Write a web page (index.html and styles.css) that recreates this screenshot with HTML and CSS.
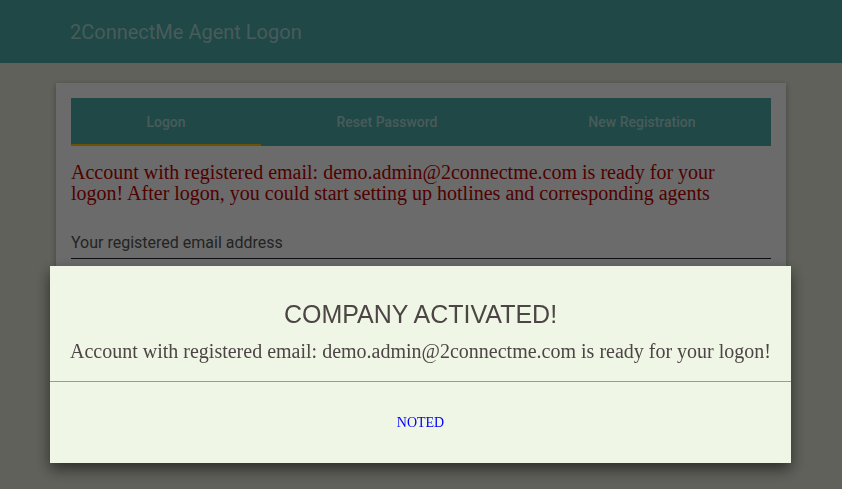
FILE: index.html
```html
<!DOCTYPE html>
<html lang="en">
<head>
    <meta charset="UTF-8">
    <meta name="viewport" content="width=device-width, initial-scale=1.0">
    <title>2ConnectMe Agent Logon</title>
    <link rel="stylesheet" href="styles.css">
</head>
<body>
    <header class="topbar">
        <h1 class="topbar-title">2ConnectMe Agent Logon</h1>
    </header>

    <main class="card">
        <nav class="tabs">
            <div class="tab active">Logon</div>
            <div class="tab">Reset Password</div>
            <div class="tab">New Registration</div>
        </nav>

        <p class="notice">Account with registered email: demo.admin@2connectme.com is ready for your logon! After logon, you could start setting up hotlines and corresponding agents</p>

        <div class="field">
            <input type="email" placeholder="Your registered email address">
        </div>
    </main>

    <!-- dialog shown after activation -->
    <div class="backdrop"></div>
    <div class="dialog">
        <div class="dialog-body">
            <h2 class="dialog-title">COMPANY ACTIVATED!</h2>
            <p class="dialog-text">Account with registered email: demo.admin@2connectme.com is ready for your logon!</p>
        </div>
        <div class="dialog-actions">
            <button class="noted-btn">NOTED</button>
        </div>
    </div>
</body>
</html>
```

FILE: styles.css
```css
* {
    box-sizing: border-box;
    margin: 0;
    padding: 0;
}

body {
    background-color: #e4e7d8;
    font-family: 'Roboto', sans-serif;
    height: 489px;
    overflow: hidden;
}

.topbar {
    height: 63px;
    background-color: #4aaca7;
    display: flex;
    align-items: center;
    padding-left: 70px;
}

.topbar-title {
    font-size: 20px;
    font-weight: 400;
    color: rgba(255, 255, 255, 0.55);
}

.card {
    width: 730px;
    margin: 20px auto 0;
    padding: 15px 15px 80px;
    background-color: #fff;
    box-shadow: 0 2px 6px rgba(0, 0, 0, 0.3);
}

.tabs {
    display: flex;
    height: 48px;
    background-color: #4aaca7;
}

.tab {
    flex: 1 1 auto;
    display: flex;
    align-items: center;
    justify-content: center;
    font-size: 14px;
    font-weight: 500;
    color: rgba(255, 255, 255, 0.55);
    border-bottom: 2px solid transparent;
    padding-top: 2px;
}

.tab.active {
    border-bottom-color: #ffc107;
}

.notice {
    margin-top: 16px;
    font-family: 'Liberation Serif', serif;
    font-size: 20px;
    line-height: 21px;
    color: #c00000;
}

.field {
    margin-top: 23px;
}

.field input {
    width: 100%;
    height: 32px;
    border: none;
    border-bottom: 1px solid #222;
    background: transparent;
    font-family: 'Roboto', sans-serif;
    font-size: 16px;
    color: #333;
    outline: none;
}

.field input::placeholder {
    color: #555;
}

.backdrop {
    position: fixed;
    inset: 0;
    background-color: rgba(0, 0, 0, 0.58);
}

.dialog {
    position: fixed;
    top: 266px;
    left: 50px;
    width: 741px;
    background-color: #eff6e6;
    box-shadow: 0 6px 14px rgba(0, 0, 0, 0.55);
}

.dialog-body {
    padding: 34px 20px 18px;
    text-align: center;
    color: #4d4545;
}

.dialog-title {
    font-family: 'Liberation Sans', Arial, sans-serif;
    font-size: 25px;
    font-weight: 400;
    line-height: 28px;
}

.dialog-text {
    margin-top: 12px;
    font-family: 'Liberation Serif', serif;
    font-size: 20px;
    line-height: 23px;
}

.dialog-actions {
    height: 82px;
    border-top: 1px solid #9a9a9a;
    display: flex;
    align-items: center;
    justify-content: center;
}

.noted-btn {
    border: none;
    background: transparent;
    font-family: 'Liberation Serif', serif;
    font-size: 14px;
    color: #0000ff;
    cursor: pointer;
}
```
